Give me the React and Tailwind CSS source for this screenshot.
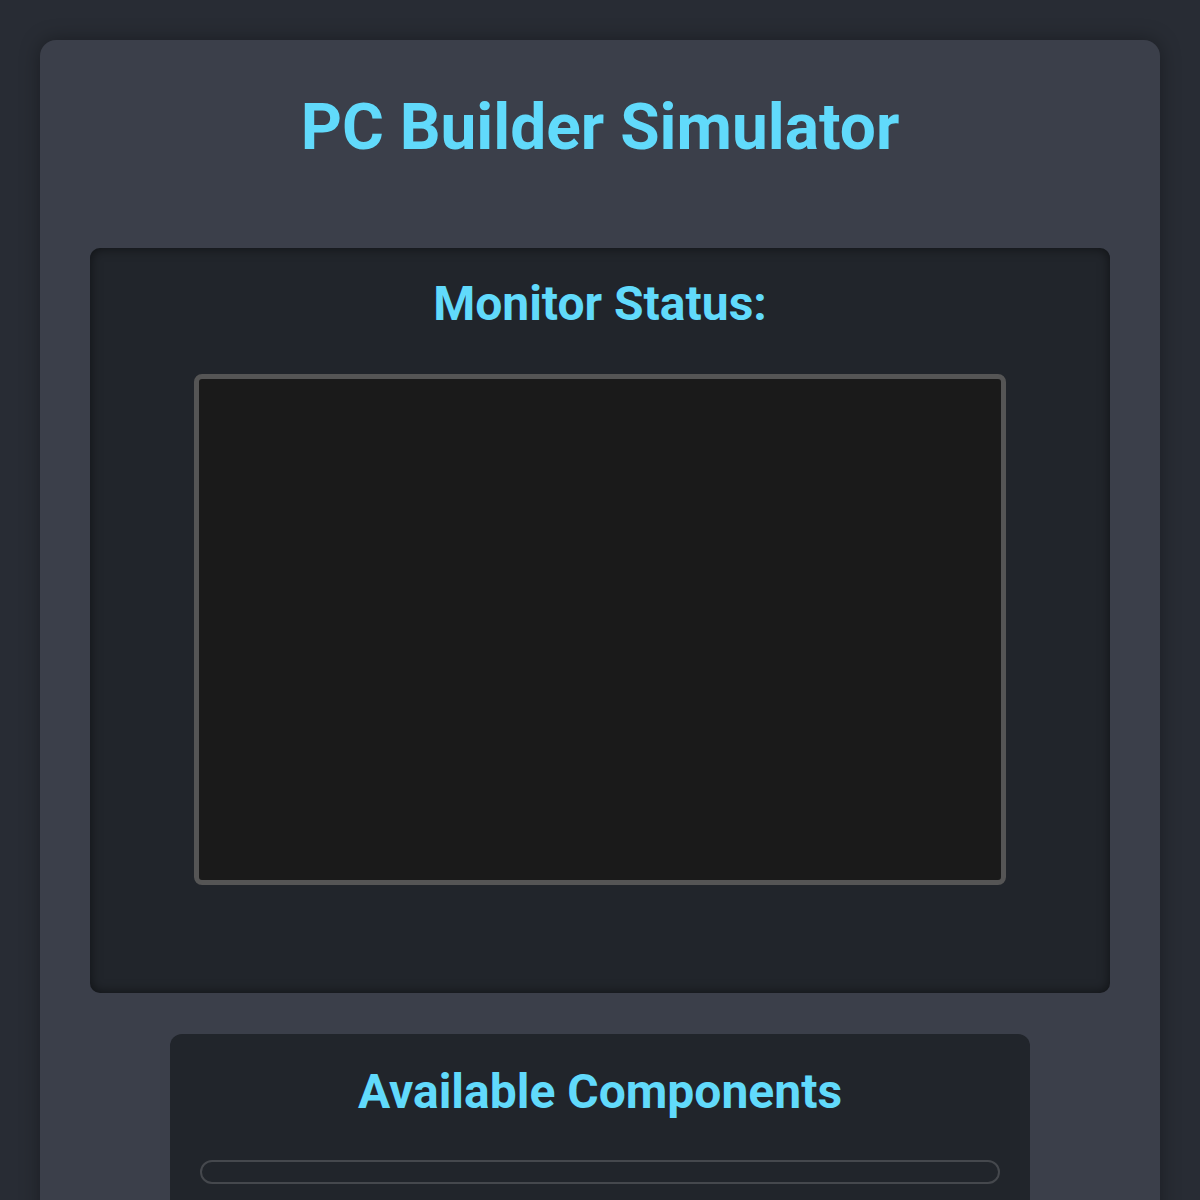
import React from 'react';

const font = { fontFamily: 'Roboto, "Noto Sans", sans-serif' };

export default function App() {
  return (
    <div className="min-h-screen bg-[#282c34] p-10" style={font}>
      <div className="rounded-2xl bg-[#3b3f4a] px-[50px] pt-[50px] pb-[60px] shadow-[0_0_20px_rgba(0,0,0,0.35)]">
        <h1 className="m-0 text-center text-[64px] font-bold leading-[76px] text-[#61dafb]">
          PC Builder Simulator
        </h1>

        {/* monitor */}
        <div className="mt-[82px] h-[745px] rounded-[10px] bg-[#21252b] px-[104px] pt-[28px] shadow-[inset_0_0_12px_rgba(0,0,0,0.55)]">
          <h2 className="m-0 text-center text-[48px] font-bold leading-[56px] text-[#61dafb]">
            Monitor Status:
          </h2>
          <div className="mx-auto mt-[42px] h-[511px] w-[812px] rounded-lg border-[5px] border-[#555555] bg-[#1a1a1a]" />
        </div>

        {/* components */}
        <div className="mx-auto mt-[41px] w-[860px] rounded-xl bg-[#21252b] px-[30px] pt-[30px] pb-[30px]">
          <h2 className="m-0 text-center text-[48px] font-bold leading-[56px] text-[#61dafb]">
            Available Components
          </h2>
          <div className="mt-[40px] flex flex-col gap-5">
            <div className="h-6 rounded-xl border-2 border-[#45484d]" />
            <div className="h-6 rounded-xl border-2 border-[#45484d]" />
          </div>
        </div>
      </div>
    </div>
  );
}
